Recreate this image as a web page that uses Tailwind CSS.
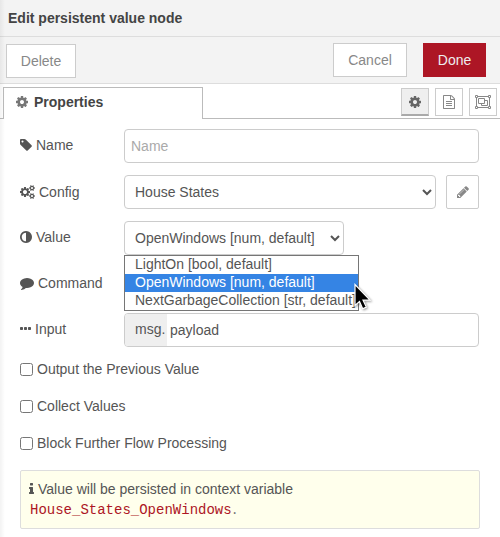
<!DOCTYPE html>
<html lang="en">
<head>
<meta charset="utf-8">
<title>Edit persistent value node</title>
<script src="https://cdn.jsdelivr.net/npm/@tailwindcss/browser@4"></script>
</head>
<body class="relative h-[537px] w-[500px] overflow-hidden bg-white font-['Liberation_Sans',Arial,sans-serif] text-[14px] leading-5 text-[#555]">
<svg class="hidden">
  <symbol id="cog" viewBox="128 0 1536 1792"><path d="M1152 896q0-106-75-181t-181-75-181 75-75 181 75 181 181 75 181-75 75-181zm512-109v222q0 12-8 23t-20 13l-185 28q-19 54-39 91 35 50 107 138 10 12 10 25t-9 23q-27 37-99 108t-94 71q-12 0-26-9l-138-108q-44 23-91 38-16 136-29 186-7 28-36 28h-222q-14 0-24.500-8.500t-11.500-21.500l-28-184q-49-16-90-37l-141 107q-10 9-25 9-14 0-25-11-126-114-165-168-7-10-7-23 0-12 8-23 15-21 51-66.500t54-70.500q-27-50-41-99l-183-27q-13-2-21-12.500t-8-23.500v-222q0-12 8-23t19-13l186-28q14-46 39-92-40-57-107-138-10-12-10-24 0-10 9-23 26-36 98.500-107.500t94.500-71.500q13 0 26 10l138 107q44-23 91-38 16-136 29-186 7-28 36-28h222q14 0 24.500 8.500t11.500 21.500l28 184q49 16 90 37l142-107q9-9 24-9 13 0 25 10 129 119 165 170 7 8 7 22 0 12-8 23-15 21-51 66.500t-54 70.500q26 50 41 98l183 28q13 2 21 12.500t8 23.500z"/></symbol>
</svg>

<header class="flex h-[37px] items-center border-b border-[#ddd] bg-[#f3f3f3] pl-2 font-bold text-[#444]">Edit persistent value node</header>

<div class="flex h-[47px] items-start border-b border-[#ddd] bg-[#f3f3f3] pt-[6px] pr-[14px] pl-[6px] text-[#888]">
  <button class="mt-px h-[34px] w-[70px] border border-[#ccc] bg-white">Delete</button>
  <button class="ml-auto h-[34px] w-[74px] border border-[#ccc] bg-white">Cancel</button>
  <button class="ml-4 h-[34px] w-[63px] bg-[#ad1625] text-[#eee]">Done</button>
</div>

<div class="flex h-[35px] items-end">
  <div class="h-px w-[3px] bg-[#bbb]"></div>
  <div class="flex h-8 w-[200px] items-center border border-b-0 border-[#bbb] pb-[3px] pl-3 font-bold text-[#444]">
    <svg class="mr-[6px] h-[14px] w-3 fill-[#777]"><use href="#cog"/></svg>Properties
  </div>
  <div class="flex h-full flex-1 items-start justify-end gap-[6px] border-b border-[#bbb] pt-1 pr-[3px]">
    <button class="flex size-7 items-center justify-center border border-b-2 border-[#ccc] border-b-[#aaa] bg-[#efefef]"><svg class="h-[14px] w-3 fill-[#666]"><use href="#cog"/></svg></button>
    <button class="flex size-7 items-center justify-center border border-[#ccc] bg-white"><svg class="h-[14px] w-3 fill-[#888]" viewBox="128 0 1536 1792"><path d="M1596 380q28 28 48 76t20 88v1152q0 40-28 68t-68 28h-1344q-40 0-68-28t-28-68v-1600q0-40 28-68t68-28h896q40 0 88 20t76 48zm-444-244v376h376q-10-29-22-41l-313-313q-12-12-41-22zm384 1528v-1024h-416q-40 0-68-28t-28-68v-416h-768v1536h1280zm-1024-864q0-14 9-23t23-9h704q14 0 23 9t9 23v64q0 14-9 23t-23 9h-704q-14 0-23-9t-9-23v-64zm736 224q14 0 23 9t9 23v64q0 14-9 23t-23 9h-704q-14 0-23-9t-9-23v-64q0-14 9-23t23-9h704zm0 256q14 0 23 9t9 23v64q0 14-9 23t-23 9h-704q-14 0-23-9t-9-23v-64q0-14 9-23t23-9h704z"/></svg></button>
    <button class="flex size-7 items-center justify-center border border-[#ccc] bg-white"><svg class="h-[14px] w-4 fill-none stroke-[#888]" viewBox="0 0 16 14"><path d="M3 1.500h10M3 12.500h10M1.500 3v8M14.500 3v8M.5.5h2v2h-2zM13.500.5h2v2h-2zM.5 11.500h2v2h-2zM13.500 11.500h2v2h-2zM3.500 3.500h6v5h-6zM9.500 5.500h3v5h-6v-2"/></svg></button>
  </div>
</div>

<main class="flex flex-col gap-3 pt-[10px] pr-[21px] pl-5">
  <div class="flex h-[34px] items-center">
    <div class="flex w-[104px] items-center gap-1 pb-[2px]"><svg class="h-[14px] w-3 fill-[#555]" viewBox="128 0 1536 1792"><path d="M576 448q0-53-37.500-90.500t-90.500-37.500-90.500 37.500-37.500 90.500 37.500 90.500 90.500 37.500 90.500-37.500 37.500-90.500zm1067 576q0 53-37 90l-491 492q-39 37-91 37-53 0-90-37l-715-716q-38-37-64.500-101t-26.500-117v-416q0-52 38-90t90-38h416q53 0 117 26.500t102 64.500l715 714q37 39 37 91z"/></svg>Name</div>
    <input class="h-[34px] w-[355px] rounded-[4px] border border-[#ccc] px-[6px] placeholder:text-[#aaa]" placeholder="Name">
  </div>
  <div class="flex h-[34px] items-center">
    <div class="flex w-[104px] items-center gap-1"><svg class="h-[14px] w-[15px] fill-[#555]" viewBox="-64 0 1920 1792"><path d="M832 896q0-106-75-181t-181-75-181 75-75 181 75 181 181 75 181-75 75-181zm768 512q0-52-38-90t-90-38-90 38-38 90q0 53 37.500 90.500t90.500 37.500 90.500-37.500 37.500-90.500zm0-1024q0-52-38-90t-90-38-90 38-38 90q0 53 37.500 90.500t90.500 37.500 90.500-37.500 37.500-90.500zm-384 421v185q0 10-7 19.500t-16 10.500l-155 24q-11 35-32 76 34 48 90 115 7 11 7 20 0 12-7 19-23 30-82.500 89.500t-78.500 59.500q-11 0-21-7l-115-90q-37 19-77 31-11 108-23 155-7 24-30 24h-186q-11 0-20-7.500t-10-17.500l-23-153q-34-10-75-31l-118 89q-7 7-20 7-11 0-21-8-144-133-144-160 0-9 7-19 10-14 41-53t47-61q-23-44-35-82l-152-24q-10-1-17-9.500t-7-19.500v-185q0-10 7-19.500t16-10.500l155-24q11-35 32-76-34-48-90-115-7-11-7-20 0-12 7-20 22-30 82-89t79-59q11 0 21 7l115 90q34-18 77-32 11-108 23-154 7-24 30-24h186q11 0 20 7.500t10 17.500l23 153q34 10 75 31l118-89q8-7 20-7 11 0 21 8 144 133 144 160 0 8-7 19-12 16-42 54t-45 60q23 48 34 82l152 23q10 2 17 10.500t7 19.500zm640 533v140q0 16-149 31-12 27-30 52 51 113 51 138 0 4-4 7-122 71-124 71-8 0-46-47t-52-68q-20 2-30 2t-30-2q-14 21-52 68t-46 47q-2 0-124-71-4-3-4-7 0-25 51-138-18-25-30-52-149-15-149-31v-140q0-16 149-31 13-29 30-52-51-113-51-138 0-4 4-7 4-2 35-20t59-34 30-16q8 0 46 46.500t52 67.500q20-2 30-2t30 2q51-71 92-112l6-2q4 0 124 70 4 3 4 7 0 25-51 138 17 23 30 52 149 15 149 31zm0-1024v140q0 16-149 31-12 27-30 52 51 113 51 138 0 4-4 7-122 71-124 71-8 0-46-47t-52-68q-20 2-30 2t-30-2q-14 21-52 68t-46 47q-2 0-124-71-4-3-4-7 0-25 51-138-18-25-30-52-149-15-149-31v-140q0-16 149-31 13-29 30-52-51-113-51-138 0-4 4-7 4-2 35-20t59-34 30-16q8 0 46 46.500t52 67.500q20-2 30-2t30 2q51-71 92-112l6-2q4 0 124 70 4 3 4 7 0 25-51 138 17 23 30 52 149 15 149 31z"/></svg>Config</div>
    <select class="h-[34px] w-[312px] rounded-[4px] border border-[#ccc] bg-white pl-[6px]"><option>House States</option></select>
    <button class="ml-[10px] flex h-[34px] w-[33px] items-center justify-center rounded-[2px] border border-[#ccc] bg-white"><svg class="h-[14px] w-3 fill-[#888]" viewBox="128 0 1536 1792"><path d="M491 1536l91-91-235-235-91 91v107h128v128h107zm523-928q0-22-22-22-10 0-17 7l-542 542q-7 7-7 17 0 22 22 22 10 0 17-7l542-542q7-7 7-17zm-54-192l416 416-832 832h-416v-416zm683 96q0 53-37 90l-166 166-416-416 166-165q36-38 90-38 53 0 91 38l235 234q37 39 37 91z"/></svg></button>
  </div>
  <div class="relative flex h-[34px] items-center">
    <div class="flex w-[104px] items-center gap-1 pb-[2px]"><svg class="h-[14px] w-3 fill-[#555]" viewBox="128 0 1536 1792"><path d="M896 1440v-1088q-148 0-273 73t-198 198-73 273 73 273 198 198 273 73zm768-544q0 209-103 385.500t-279.500 279.500-385.500 103-385.500-103-279.500-279.500-103-385.500 103-385.500 279.500-279.500 385.500-103 385.500 103 279.500 279.500 103 385.500z"/></svg>Value</div>
    <select class="h-[34px] w-[220px] rounded-[4px] border border-[#ccc] bg-white pl-[6px]"><option>OpenWindows [num, default]</option></select>
    <div class="absolute top-[34px] left-[104px] z-10 h-14 w-[235px] overflow-hidden border border-[#767676] bg-white leading-4 whitespace-nowrap">
      <div class="h-[18px] pl-[10px]">LightOn [bool, default]</div>
      <div class="h-[18px] bg-[#3584e4] pl-[10px] text-white">OpenWindows [num, default]</div>
      <div class="h-[18px] pl-[10px]">NextGarbageCollection [str, default]</div>
    </div>
    <svg class="absolute top-[62px] left-[333px] z-20 h-[30px] w-5 drop-shadow-[1px_1px_1px_rgba(0,0,0,0.4)]" viewBox="0 0 20 30"><path d="M2 1.500v21l4.500-4 3.200 7.300 3.600-1.700-3.300-7h7z" fill="#000" stroke="#fff" stroke-width="1.200"/></svg>
  </div>
  <div class="flex h-[34px] items-center">
    <div class="flex w-[104px] items-center gap-1 pb-[2px]"><svg class="size-[14px] fill-[#555]" viewBox="0 0 1792 1792"><path d="M1792 896q0 174-120 321.500t-326 233-450 85.500q-70 0-145-8-198 175-460 242-49 14-114 22-17 2-30.500-9t-17.500-29v-1q-3-4-.5-12t2-10 4.500-9.500l6-9 7-8.500 8-9q7-8 31-34.500t34.500-38 31-39.500 32.500-51 27-59 26-76q-157-89-247.500-220t-90.500-281q0-130 71-248.500t191-204.500 286-136.500 348-50.500q244 0 450 85.500t326 233 120 321.500z"/></svg>Command</div>
  </div>
  <div class="flex h-[34px] items-center">
    <div class="flex w-[104px] items-center gap-1 pb-[2px]"><svg class="h-[14px] w-[11px] fill-[#555]" viewBox="0 0 11 14"><rect y="5" width="3" height="3" rx=".7"/><rect x="4" y="5" width="3" height="3" rx=".7"/><rect x="8" y="5" width="3" height="3" rx=".7"/></svg>Input</div>
    <div class="flex h-[34px] w-[355px] overflow-hidden rounded-[4px] border border-[#ccc]">
      <div class="w-[42px] bg-[#efefef] pt-[5px] pl-[10px]">msg.</div>
      <div class="pt-[6px] pl-[3px]">payload</div>
    </div>
  </div>
  <div class="flex flex-col gap-[17px]">
    <label class="flex items-center gap-1"><input type="checkbox" class="size-[13px]">Output the Previous Value</label>
    <label class="flex items-center gap-1"><input type="checkbox" class="size-[13px]">Collect Values</label>
    <label class="flex items-center gap-1"><input type="checkbox" class="size-[13px]">Block Further Flow Processing</label>
  </div>
  <div class="mt-[5px] h-[59px] w-[460px] rounded-[2px] border border-[#ddd] bg-[#ffffec] pt-2 pl-2">
    <div class="flex items-center gap-1"><svg class="h-[14px] w-[5px] fill-[#555]" viewBox="576 0 640 1792"><path d="M1216 1344v128q0 26-19 45t-45 19h-512q-26 0-45-19t-19-45v-128q0-26 19-45t45-19h64v-384h-64q-26 0-45-19t-19-45v-128q0-26 19-45t45-19h384q26 0 45 19t19 45v576h64q26 0 45 19t19 45zm-128-1152v192q0 26-19 45t-45 19h-256q-26 0-45-19t-19-45v-192q0-26 19-45t45-19h256q26 0 45 19t19 45z"/></svg>Value will be persisted in context variable</div>
    <div class="pt-px pl-px font-['Liberation_Mono',monospace] text-[#ad1625]">House_States_OpenWindows<span class="-ml-px text-[13px] text-[#777]">.</span></div>
  </div>
</main>
<div class="absolute inset-y-0 left-0 w-[5px] bg-linear-to-r from-black/5 to-transparent"></div>
</body>
</html>
